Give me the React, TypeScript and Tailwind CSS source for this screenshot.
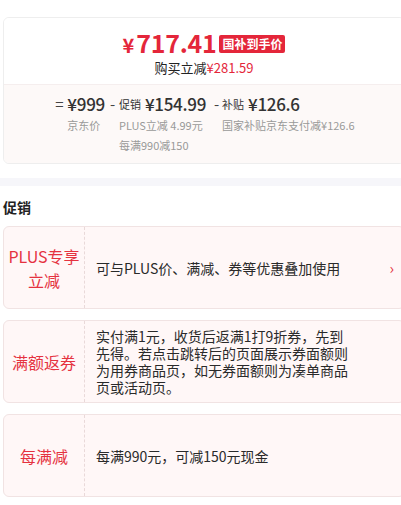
import React from "react";

const font = { fontFamily: '"Noto Sans CJK SC", "Noto Sans", sans-serif' };

function PromoCard({
  label,
  children,
  arrow,
}: {
  label: React.ReactNode;
  children: React.ReactNode;
  arrow?: boolean;
}) {
  return (
    <div className="flex w-[402px] h-[83px] rounded-[6px] border border-[#f1e3e3] bg-[#fff7f7]">
      <div className="w-[81px] shrink-0 flex items-center justify-center text-center text-[16px] leading-[24px] text-[#e5323f] border-r border-dashed border-[#e9d9d9]">
        {label}
      </div>
      <div className="flex-1 flex items-center pl-[11px] pr-[10px] text-[14px] leading-[16px] text-[#2a2a2a]">
        <div className="flex-1">{children}</div>
        {arrow && <span className="text-[#e5323f] text-[15px] ml-2">›</span>}
      </div>
    </div>
  );
}

function Col({
  sign,
  signW,
  label,
  amount,
  subs,
  extra,
}: {
  sign: string;
  signW: string;
  label?: string;
  amount: string;
  subs: string[];
  extra?: string;
}) {
  return (
    <div className={`flex ${extra ?? ""}`}>
      <div className={`${signW} h-[22px] flex items-center text-[15px] text-[#444]`}>{sign}</div>
      <div className="flex flex-col">
        <div className="flex items-center h-[22px] text-[#333]">
          {label && <span className="text-[11px] mr-[4px]">{label}</span>}
          <span className="text-[17px] font-medium tracking-[-0.3px]">{amount}</span>
        </div>
        {subs.map((s) => (
          <div key={s} className="text-[11px] text-[#999] leading-[20px] whitespace-nowrap">
            {s}
          </div>
        ))}
      </div>
    </div>
  );
}

export default function App() {
  return (
    <div className="w-[401px] h-[505px] bg-white overflow-hidden" style={font}>
      <div className="pt-[17px] pl-[3px]">
        <div className="w-[402px] rounded-[6px] border border-[#eeeeee] overflow-hidden">
          <div className="h-[66px] bg-white flex flex-col items-center pt-[13px]">
            <div className="flex items-center h-[24px]">
              <div className="flex items-baseline">
                <span className="text-[#e4263a] font-bold text-[20px] leading-[24px] mr-[2px]">¥</span>
                <span className="text-[#e4263a] font-bold text-[25px] leading-[24px] tracking-[-0.3px]">717.41</span>
              </div>
              <span className="ml-[3px] bg-[#e4263a] text-white font-bold text-[12px] leading-[18px] px-[3px] rounded-[2px] mt-[2px]">国补到手价</span>
            </div>
            <div className="text-[13px] leading-[18px] mt-[4px] text-[#222]">
              购买立减<span className="text-[#e4263a]">¥281.59</span>
            </div>
          </div>
          <div className="h-[79px] bg-[#fdf9f8] border-t border-[#f5eeee] flex justify-center pt-[8px] pl-[2px]">
            <div className="flex items-start gap-[5px]">
              <Col sign="=" signW="w-[12px]" amount="¥999" subs={["京东价"]} />
              <Col sign="-" signW="w-[9px]" label="促销" amount="¥154.99" subs={["PLUS立减 4.99元", "每满990减150"]} />
              <Col sign="-" signW="w-[8px]" label="补贴" amount="¥126.6" subs={["国家补贴京东支付减¥126.6"]} extra="ml-[3px]" />
            </div>
          </div>
        </div>
      </div>
      <div className="h-[14px]" />
      <div className="h-[8px] bg-[#f6f6fa]" />
      <div className="pl-[3px]">
        <div className="mt-[11px] text-[14px] font-bold leading-[20px] text-[#222]">促销</div>
        <div className="mt-[9px] flex flex-col gap-[11px]">
          <PromoCard
            arrow
            label={
              <div>
                PLUS专享
                <br />
                立减
              </div>
            }
          >
            可与PLUS价、满减、券等优惠叠加使用
          </PromoCard>
          <PromoCard label="满额返券">
            <div className="w-[255px] leading-[17px]">
              实付满1元，收货后返满1打9折券，先到先得。若点击跳转后的页面展示券面额则为用券商品页，如无券面额则为凑单商品页或活动页。
            </div>
          </PromoCard>
          <PromoCard label="每满减">每满990元，可减150元现金</PromoCard>
        </div>
      </div>
    </div>
  );
}
